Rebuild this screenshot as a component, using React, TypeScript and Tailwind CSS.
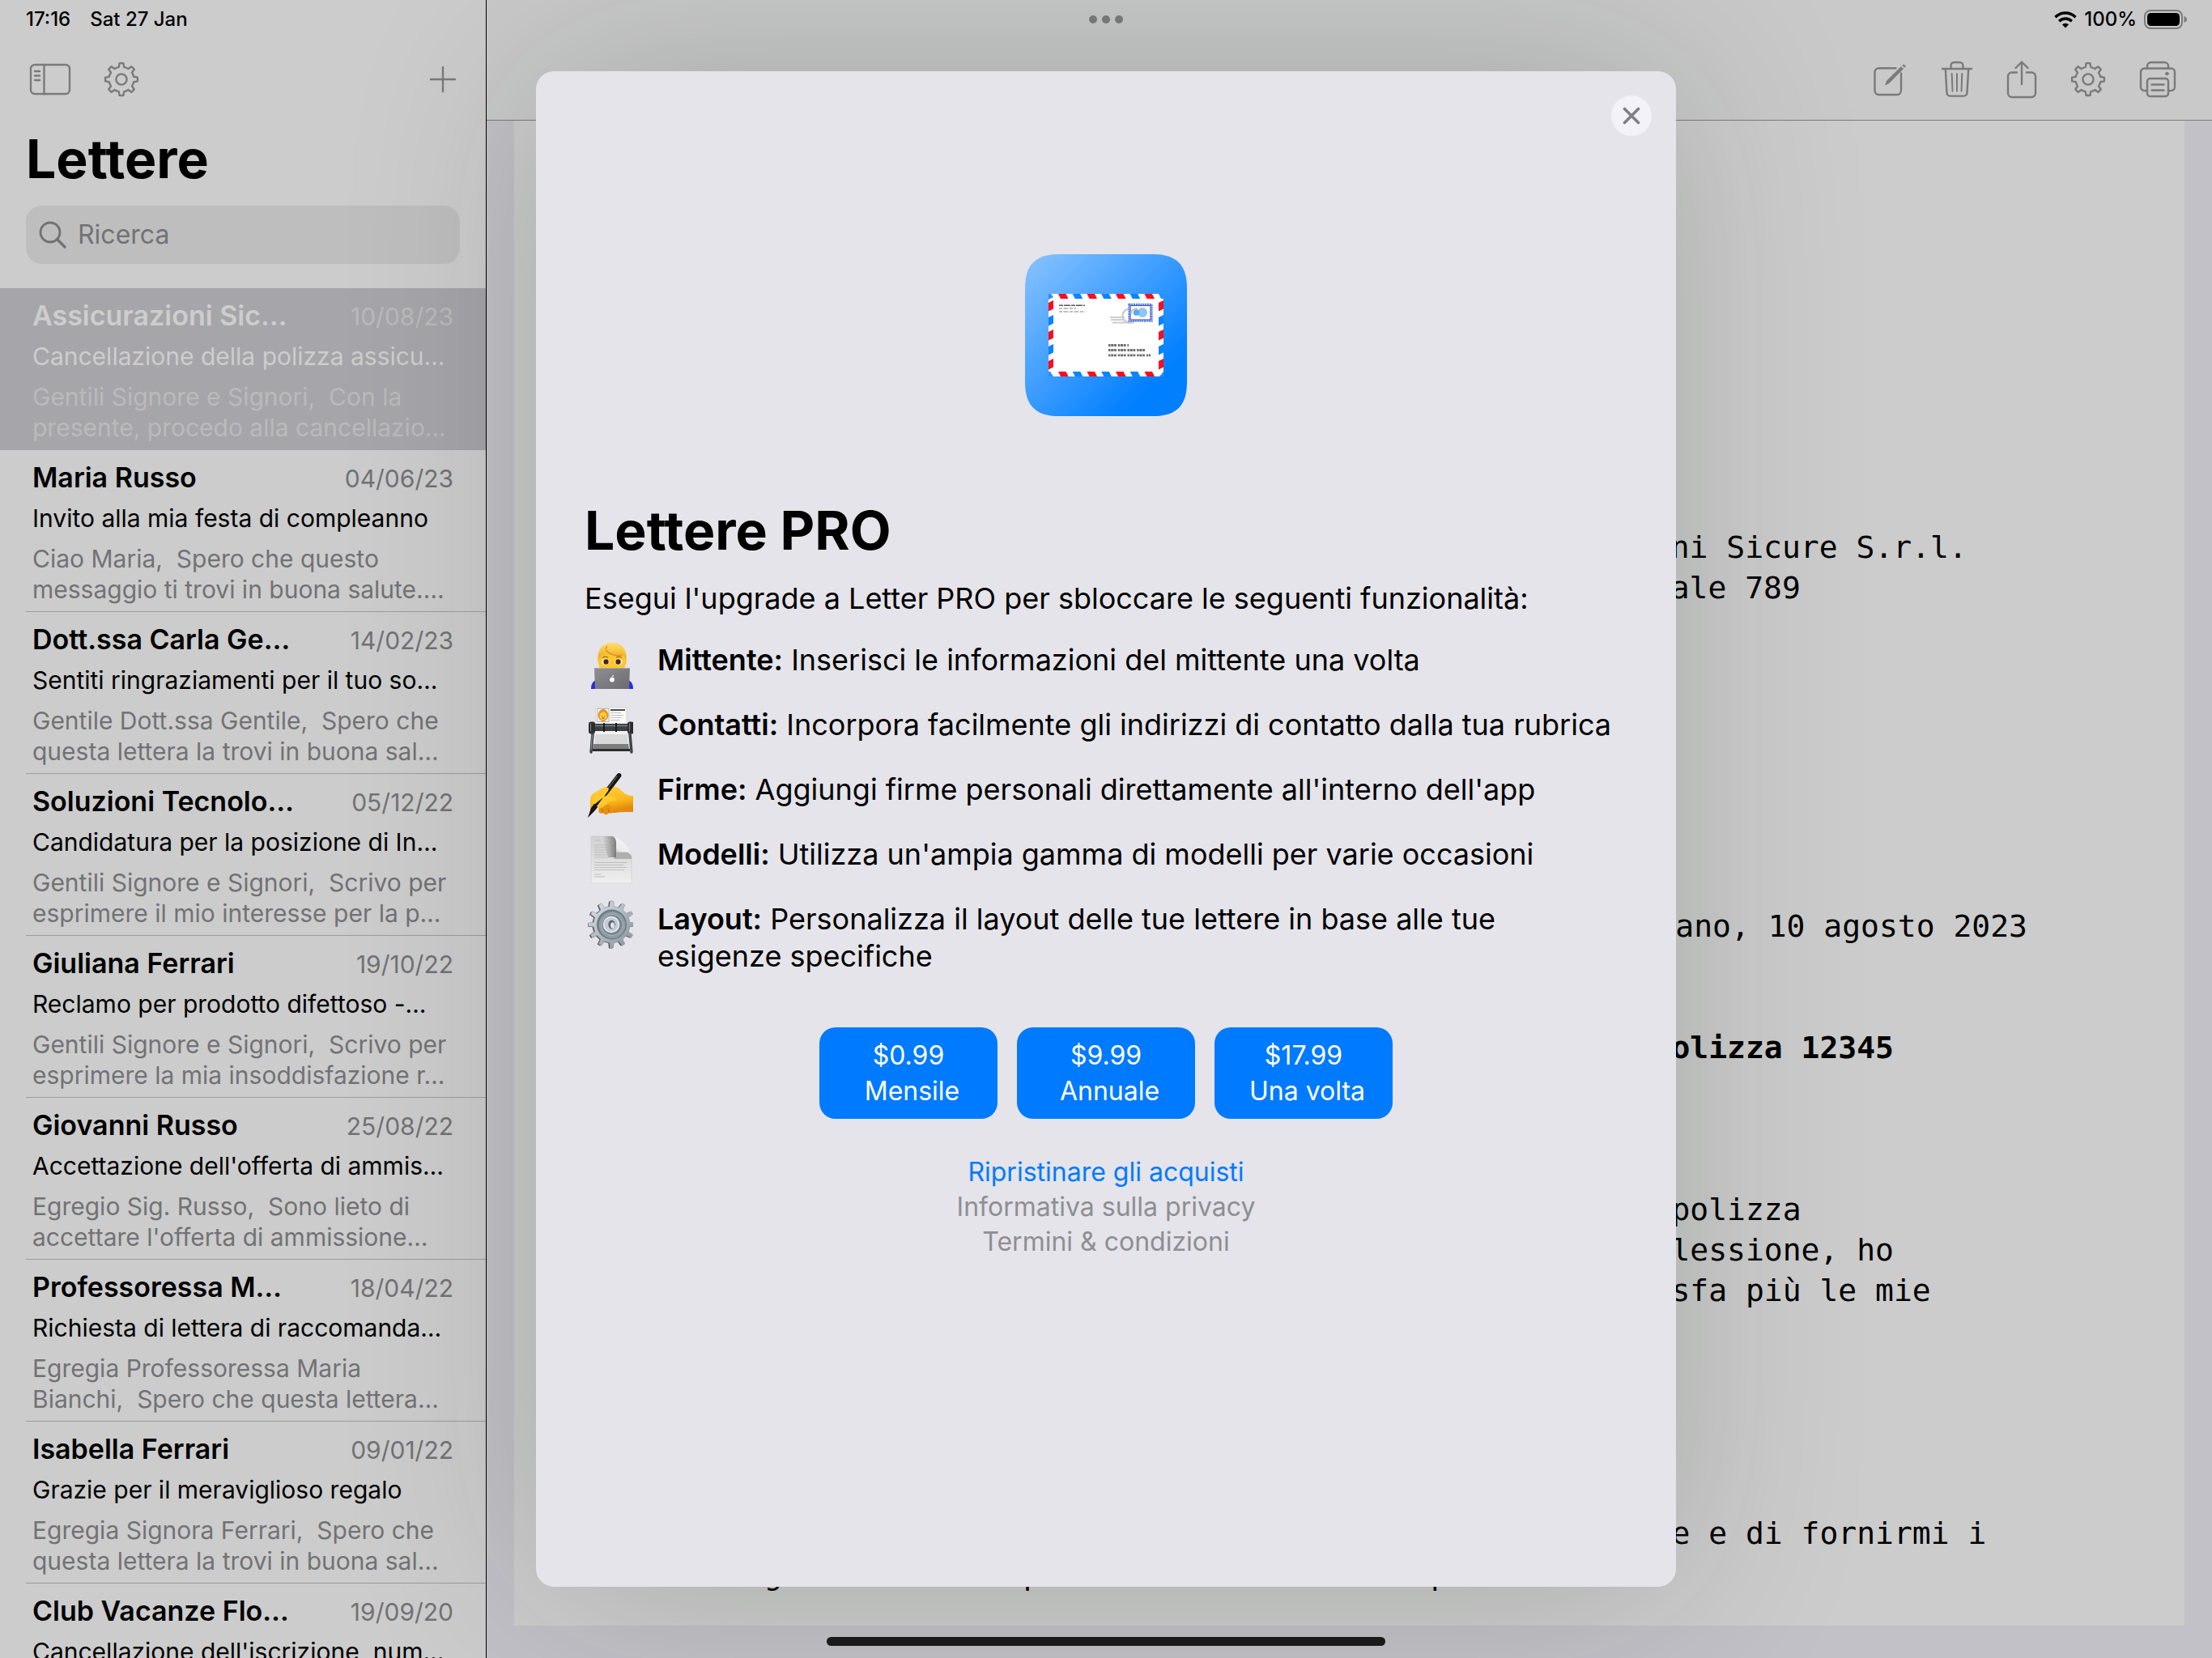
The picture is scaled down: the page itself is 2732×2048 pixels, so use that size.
import React from "react";

type Letter = {
  name: string;
  date: string;
  subject: string;
  preview: [string, string];
  selected?: boolean;
};

const letters: Letter[] = [
  {
    name: "Assicurazioni Sic…",
    date: "10/08/23",
    subject: "Cancellazione della polizza assicu…",
    preview: ["Gentili Signore e Signori,  Con la", "presente, procedo alla cancellazio…"],
    selected: true,
  },
  {
    name: "Maria Russo",
    date: "04/06/23",
    subject: "Invito alla mia festa di compleanno",
    preview: ["Ciao Maria,  Spero che questo", "messaggio ti trovi in buona salute.…"],
  },
  {
    name: "Dott.ssa Carla Ge…",
    date: "14/02/23",
    subject: "Sentiti ringraziamenti per il tuo so…",
    preview: ["Gentile Dott.ssa Gentile,  Spero che", "questa lettera la trovi in buona sal…"],
  },
  {
    name: "Soluzioni Tecnolo…",
    date: "05/12/22",
    subject: "Candidatura per la posizione di In…",
    preview: ["Gentili Signore e Signori,  Scrivo per", "esprimere il mio interesse per la p…"],
  },
  {
    name: "Giuliana Ferrari",
    date: "19/10/22",
    subject: "Reclamo per prodotto difettoso -…",
    preview: ["Gentili Signore e Signori,  Scrivo per", "esprimere la mia insoddisfazione r…"],
  },
  {
    name: "Giovanni Russo",
    date: "25/08/22",
    subject: "Accettazione dell'offerta di ammis…",
    preview: ["Egregio Sig. Russo,  Sono lieto di", "accettare l'offerta di ammissione…"],
  },
  {
    name: "Professoressa M…",
    date: "18/04/22",
    subject: "Richiesta di lettera di raccomanda…",
    preview: ["Egregia Professoressa Maria", "Bianchi,  Spero che questa lettera…"],
  },
  {
    name: "Isabella Ferrari",
    date: "09/01/22",
    subject: "Grazie per il meraviglioso regalo",
    preview: ["Egregia Signora Ferrari,  Spero che", "questa lettera la trovi in buona sal…"],
  },
  {
    name: "Club Vacanze Flo…",
    date: "19/09/20",
    subject: "Cancellazione dell'iscrizione, num…",
    preview: ["Gentili Signore e Signori,  Con la", "presente desidero comunicare la…"],
  },
];

/* Outline of a cog: straight-sided teeth joined by arcs. */
function cogPath(cx: number, cy: number, teeth: number, rOut: number, rIn: number, tip: number, root: number) {
  const pt = (r: number, deg: number) => {
    const a = ((deg - 90) * Math.PI) / 180;
    return `${(cx + r * Math.cos(a)).toFixed(2)} ${(cy + r * Math.sin(a)).toFixed(2)}`;
  };
  const step = 360 / teeth;
  let d = "";
  for (let i = 0; i < teeth; i++) {
    const a = i * step;
    d += i === 0 ? `M${pt(rIn, a - root)}` : `A${rIn} ${rIn} 0 0 1 ${pt(rIn, a - root)}`;
    d += `L${pt(rOut, a - tip)}A${rOut} ${rOut} 0 0 1 ${pt(rOut, a + tip)}L${pt(rIn, a + root)}`;
  }
  return `${d}A${rIn} ${rIn} 0 0 1 ${pt(rIn, -root)}Z`;
}

const line = {
  fill: "none",
  stroke: "currentColor",
  strokeWidth: 2.4,
  strokeLinecap: "round" as const,
  strokeLinejoin: "round" as const,
};

function GearIcon() {
  return (
    <svg width="44" height="44" viewBox="0 0 44 44" {...line}>
      <path d={cogPath(22, 22, 8, 20, 15.5, 7, 12)} />
      <circle cx="22" cy="22" r="6.6" />
    </svg>
  );
}

function SidebarIcon() {
  return (
    <svg width="52" height="42" viewBox="0 0 52 42" {...line}>
      <rect x="2" y="3" width="48" height="36" rx="5" />
      <path d="M18.500 3V39M7 11H13M7 16.500H13M7 22H13" />
    </svg>
  );
}

function PlusIcon() {
  return (
    <svg width="34" height="34" viewBox="0 0 34 34" {...line}>
      <path d="M17 2V32M2 17H32" />
    </svg>
  );
}

function ComposeIcon() {
  return (
    <svg width="44" height="44" viewBox="0 0 44 44" {...line}>
      <path d="M29.500 8.200H8.500a5 5 0 0 0-5 5V36a5 5 0 0 0 5 5H31a5 5 0 0 0 5-5V14.500" />
      <path d="M16.800 28.400l1.800-4.600L36 6.600l2.400 2.400L21.200 26.400z" fill="currentColor" strokeWidth="1" />
      <path d="M38.200 4.700l1-1 2.200 2.200-1 1z" fill="currentColor" strokeWidth="1" />
    </svg>
  );
}

function TrashIcon() {
  return (
    <svg width="40" height="46" viewBox="0 0 40 46" {...line}>
      <path d="M2 10H38M12.500 10V6a4 4 0 0 1 4-4h7a4 4 0 0 1 4 4v4M5.800 10l1.700 29.800a4 4 0 0 0 4 3.800h17a4 4 0 0 0 4-3.800L34.200 10" />
      <path d="M13.700 16l.8 21.500M20 16V37.500M26.300 16l-.8 21.500" strokeWidth="2" />
    </svg>
  );
}

function ShareIcon() {
  return (
    <svg width="38" height="48" viewBox="0 0 38 48" {...line}>
      <path d="M13 15.500H7a5 5 0 0 0-5 5V41a5 5 0 0 0 5 5H31a5 5 0 0 0 5-5V20.500a5 5 0 0 0-5-5H25" />
      <path d="M19 30V3M11.500 10L19 2.500L26.500 10" />
    </svg>
  );
}

function PrinterIcon() {
  return (
    <svg width="46" height="46" viewBox="0 0 46 46" {...line}>
      <path d="M10 9.500V6.500a4.500 4.500 0 0 1 4.500-4.500h17A4.500 4.500 0 0 1 36 6.500v3" />
      <path d="M10 37H6.500A4.500 4.500 0 0 1 2 32.500V14a4.500 4.500 0 0 1 4.500-4.500h33A4.500 4.500 0 0 1 44 14v18.500a4.500 4.500 0 0 1-4.500 4.500H36" />
      <rect x="10" y="22" width="26" height="22" rx="3.500" />
      <path d="M15.500 29.500h15M15.500 36.500h15" />
      <circle cx="34.500" cy="16" r="1.800" fill="currentColor" strokeWidth="1" />
    </svg>
  );
}

function SearchIcon() {
  return (
    <svg width="34" height="34" viewBox="0 0 34 34" {...line} strokeWidth={2.8}>
      <circle cx="14" cy="14" r="12" />
      <path d="M23 23L32 32" strokeWidth={3.2} />
    </svg>
  );
}

function WifiIcon() {
  return (
    <svg width="28" height="21" viewBox="0 0 28 21" fill="none" stroke="#000" strokeWidth="3.400">
      <path d="M1.500 7.200a17.800 17.800 0 0 1 25 0" />
      <path d="M6.200 12.200a11.200 11.200 0 0 1 15.600 0" />
      <path d="M14 20.500l-4-4.200a5.800 5.800 0 0 1 8 0z" fill="#000" stroke="none" />
    </svg>
  );
}

function BatteryIcon() {
  return (
    <svg width="54" height="24" viewBox="0 0 54 24">
      <rect x="1" y="1" width="46" height="22" rx="7" fill="none" stroke="#7b7b7d" strokeWidth="2" />
      <rect x="4" y="4" width="40" height="16" rx="4.500" fill="#000" />
      <path d="M49.500 8c2.600 1 3.500 2.600 3.500 4s-.9 3-3.500 4z" fill="#7b7b7d" />
    </svg>
  );
}

function AppIcon() {
  const dx = [41, 58.750, 76.500, 94.250, 112, 129.750, 147.500];
  const dy = [58, 76, 94, 112, 130];
  return (
    <svg width="200" height="200" viewBox="0 0 200 200" aria-label="Lettere PRO" role="img">
      <defs>
        <linearGradient id="app-bg" x1="0" y1="0" x2="1" y2="1">
          <stop offset="0" stopColor="#8ac3ff" />
          <stop offset="0.450" stopColor="#3d9dff" />
          <stop offset="0.800" stopColor="#007fff" />
        </linearGradient>
      </defs>
      <path
        d="M42 0H158C187 0 200 13 200 42V158C200 187 187 200 158 200H42C13 200 0 187 0 158V42C0 13 13 0 42 0Z"
        fill="url(#app-bg)"
      />
      <rect x="29" y="49" width="142" height="102" fill="#fff" />
      {dx.map((x, i) => (
        <g key={x} fill={i % 2 ? "#0a84ff" : "#ff0a1f"}>
          <path d={`M${x} 49h9.500l3 6h-9.500z`} />
          <path d={`M${x} 145h9.500l3 6h-9.500z`} />
        </g>
      ))}
      {dy.map((y, i) => (
        <g key={y} fill={i % 2 ? "#0a84ff" : "#ff0a1f"}>
          <path d={`M29 ${y + 2}l6-3v10.500l-6 3z`} />
          <path d={`M165 ${y + 2}l6-3v10.500l-6 3z`} />
        </g>
      ))}
      <path d="M29 49h3l3 4-6 3zM165 49h6v6h-3zM29 145h2l4 6h-6zM171 145v6h-5z" fill="#2a90ff" />
      <path d="M42 63.200h32" stroke="#555" strokeWidth="1.500" strokeDasharray="5 1 8 1" />
      <path d="M42 67h21M42 71h32" stroke="#aaa" strokeWidth="1.500" strokeDasharray="4 1.500 6 1.500" />
      <g fill="none" stroke="#cdcdcd">
        <circle cx="129" cy="76" r="8.500" strokeWidth="2.500" />
        <path d="M105 78h18M106 81h16M108 84.500h26" strokeWidth="2.200" />
      </g>
      <rect x="128.500" y="62" width="28" height="20.500" fill="#fff" stroke="#4f86ea" strokeWidth="2.400" strokeDasharray="2 0.800" />
      <rect x="130" y="63.500" width="25" height="17.500" fill="#fff" stroke="#5b4fb0" strokeWidth="1.200" />
      <circle cx="145" cy="72" r="6" fill="#8ec5fb" />
      <circle cx="137.500" cy="72" r="3.800" fill="#5aa9f0" />
      <path d="M131 74c0-5 3-7 8-7" fill="none" stroke="#b9bec4" strokeWidth="1.600" />
      <path d="M103 112.500h25M103 118.500h46M103 124.800h52" stroke="#6e6e6e" strokeWidth="2.800" strokeDasharray="2.500 0.700 3.200 0.700 2.800 1.800" />
    </svg>
  );
}

function TechnologistIcon() {
  return (
    <svg width="56" height="60" viewBox="0 0 56 60">
      <defs>
        <linearGradient id="hair" x1="0" y1="0" x2="0" y2="1">
          <stop offset="0" stopColor="#ffdb62" />
          <stop offset="1" stopColor="#f0a71e" />
        </linearGradient>
        <linearGradient id="lap" x1="0" y1="0" x2="1" y2="1">
          <stop offset="0" stopColor="#8e8e93" />
          <stop offset="1" stopColor="#6c6c70" />
        </linearGradient>
      </defs>
      <path d="M4 59c0-6 2-9 6-11h40c4 2 6 5 6 11z" fill="#2b2fd8" />
      <path d="M13 28C10 11 17 2 30 2s20 9 17 26z" fill="url(#hair)" />
      <path d="M14.500 17h31c1.500 3 2 6 1.500 9-.5 6-3 11-6 13H19c-3-2-5.500-7-6-13-.5-3 0-6 1.500-9z" fill="#ffc62f" />
      <path d="M13 22c0-6 1-9 4-12C20 5 26 3 30 4c8 0 14 5 16 12 .5 2 1 4 1 6-2-2-3-3-4-5-7 2-15 0-20-5-2 4-6 6-10 10z" fill="url(#hair)" />
      <path d="M23 12c5 5 13 7 20 5M24 6c-2 2-2 4-1 6" fill="none" stroke="#d98c12" strokeWidth="1.100" />
      <ellipse cx="22" cy="25.500" rx="4.600" ry="3.800" fill="#fff" />
      <ellipse cx="38" cy="25.500" rx="4.600" ry="3.800" fill="#fff" />
      <circle cx="22.500" cy="25.500" r="3.200" fill="#4a250f" />
      <circle cx="37.500" cy="25.500" r="3.200" fill="#4a250f" />
      <path d="M18 20.500c2-1.500 5-1.500 7-.3M35 20.200c2-1.200 5-1.200 7 .3" fill="none" stroke="#a8660c" strokeWidth="1.200" />
      <path d="M8 33.500h44l-1 25.500H9z" fill="url(#lap)" />
      <path d="M8 33.500h44" stroke="#a5a5a9" strokeWidth="1.200" />
      <circle cx="30" cy="47.500" r="2.900" fill="#fff" />
      <path d="M30 44c0-1.500 1-2.200 2-2.200 0 1.400-.8 2.200-2 2.200z" fill="#fff" />
    </svg>
  );
}

function CardIndexIcon() {
  return (
    <svg width="56" height="60" viewBox="0 0 56 60">
      <rect x="10" y="2" width="38" height="20" fill="#fafafa" stroke="#cfcfcf" strokeWidth="0.800" />
      <rect x="12" y="3.500" width="14" height="16" fill="#fff" stroke="#999" strokeWidth="0.800" />
      <ellipse cx="19" cy="11.500" rx="6.400" ry="7.400" fill="#e8951c" />
      <ellipse cx="19" cy="12.500" rx="4.400" ry="5" fill="#ffcf4d" />
      <path d="M17.300 12v.8M20.700 12v.8M17.500 15h3" stroke="#5b2d0b" strokeWidth="1" />
      <path d="M28 5h18" stroke="#222" strokeWidth="1.600" />
      <path d="M28 8.500h13M28 11.500h16M28 14.500h14M28 17.500h12" stroke="#bbb" strokeWidth="0.900" />
      <path d="M9 30h40v18H9z" fill="#d9d9da" />
      <path d="M9 30h40v5H9z" fill="#f2f2f2" />
      <path d="M7 47h43l1 7H6z" fill="#7d7e80" />
      <rect x="6" y="53" width="46" height="3" fill="#2b2d30" />
      <rect x="3" y="22" width="52" height="9" rx="2" fill="#3a3d41" />
      <path d="M9 24.500h40" stroke="#7d8287" strokeWidth="1.500" />
      <rect x="1" y="19.500" width="8" height="15" rx="3" fill="#2a2c30" />
      <rect x="49" y="19.500" width="8" height="15" rx="3" fill="#2a2c30" />
      <path d="M3.500 21.500v10M51.500 21.500v10" stroke="#7a7f85" strokeWidth="1.200" />
      <path d="M20 21v11M35 21v11" stroke="#191a1c" strokeWidth="2" />
      <path d="M6 34L4 57M52 34l2 23" stroke="#3f4347" strokeWidth="3.400" strokeLinecap="round" />
      <path d="M5.500 36L4 54" stroke="#9aa0a5" strokeWidth="0.900" />
    </svg>
  );
}

function WritingHandIcon() {
  return (
    <svg width="56" height="60" viewBox="0 0 56 60">
      <defs>
        <linearGradient id="skin" x1="0" y1="0" x2="0.300" y2="1">
          <stop offset="0" stopColor="#ffd23c" />
          <stop offset="0.650" stopColor="#fdb91e" />
          <stop offset="1" stopColor="#e3890c" />
        </linearGradient>
      </defs>
      <path d="M10 38c2 9 7 14 13 14h10c6-1 12-1 23-1V31c-6 0-10-2-14-6-4-4-8-6-13-6-8 0-14 4-22 9-3 2-4 4-4 8v14c2-3 5-8 7-12z" fill="url(#skin)" />
      <path d="M14 47c-2 4 1 7 5 5 2 3 5 3 7 0 3 2 5 0 6-3l-6-7-9 1z" fill="#e8930f" />
      <path d="M18 48c0 2 0 3 1 4M25 47c1 2 1 3 1 5" stroke="#b8650a" strokeWidth="1" fill="none" />
      <path d="M36 4.500c2-3 7-1 5 3L9 49l-9 9 4-12z" fill="#151515" />
      <path d="M36.500 6.500L7 46" stroke="#666" strokeWidth="1.200" />
      <path d="M6 39c2-8 8-15 16-18 3-1 5 1 3 4l-5 7c7-3 14-1 17 5-7-1-12 1-15 5-3 4-8 5-11 2-2-2-3-3-5-5z" fill="#ffc92f" />
      <path d="M19 33L9.500 46l-5 2 2-5z" fill="#151515" />
    </svg>
  );
}

function PageCurlIcon() {
  return (
    <svg width="56" height="60" viewBox="0 0 56 60">
      <defs>
        <linearGradient id="sheet" x1="0" y1="0" x2="0" y2="1">
          <stop offset="0" stopColor="#d2d2d2" />
          <stop offset="0.500" stopColor="#dedede" />
          <stop offset="1" stopColor="#f0f0f0" />
        </linearGradient>
        <linearGradient id="curl" x1="0.100" y1="1" x2="0.900" y2="0.100">
          <stop offset="0" stopColor="#8a8a8a" />
          <stop offset="0.350" stopColor="#e9e9e9" />
          <stop offset="1" stopColor="#fafafa" />
        </linearGradient>
        <linearGradient id="curl-shade" x1="0" y1="0.500" x2="1" y2="0.500">
          <stop offset="0" stopColor="#666" stopOpacity="0" />
          <stop offset="1" stopColor="#555" stopOpacity="0.700" />
        </linearGradient>
      </defs>
      <path d="M4 1h25c4 0 6 3 6 8v5c0 4 2 6 6 6h6c4 0 7 2 7 6v33H4z" fill="url(#sheet)" stroke="#c9c9c9" strokeWidth="0.600" />
      <path d="M18 1h11c4 0 6 3 6 8v18H25z" fill="url(#curl-shade)" />
      <path d="M33 19c1 1 3 2 8 2h6c4 0 6 2 7 5v3H32z" fill="#777" opacity="0.450" />
      <path d="M29 1c11 1 22 12 25 24-2-4-5-5-8-5h-5c-4 0-6-2-6-6V9c0-5-2-8-6-8z" fill="url(#curl)" />
      <path d="M8 6h8M8 12h17M8 15h20M8 18h18M8 21h20M8 24h21M8 27h18M8 33.500h40M8 36.500h36M8 39.500h40M8 42.500h37M8 48h8M8 51h13" stroke="#b4b4b4" strokeWidth="0.800" />
    </svg>
  );
}

function MetalGearIcon() {
  return (
    <svg width="56" height="60" viewBox="0 0 56 60">
      <defs>
        <linearGradient id="metal" x1="0" y1="0" x2="1" y2="1">
          <stop offset="0" stopColor="#dfe6ec" />
          <stop offset="0.500" stopColor="#aeb8c2" />
          <stop offset="1" stopColor="#838e98" />
        </linearGradient>
      </defs>
      <path d={cogPath(28, 30.500, 12, 29, 22.500, 4, 7)} fill="#5b4a42" />
      <path d={cogPath(29.500, 30, 12, 29, 22.500, 4, 7)} fill="url(#metal)" stroke="#8a949d" strokeWidth="0.600" />
      <circle cx="29.500" cy="30" r="18.500" fill="#6f7a83" />
      <circle cx="30" cy="30.500" r="16.500" fill="#929ca5" />
      <circle cx="30" cy="30.500" r="13" fill="#7a848d" />
      <circle cx="30" cy="30.500" r="13" fill="none" stroke="#aeb7bf" strokeWidth="1" />
      <circle cx="29" cy="30" r="9.500" fill="#c3ccd5" />
      <circle cx="29" cy="30" r="9.500" fill="none" stroke="#eef2f5" strokeWidth="1.400" />
      <ellipse cx="29.500" cy="30" rx="4.200" ry="5.400" fill="#5d6770" />
      <ellipse cx="30.500" cy="31" rx="2.400" ry="3.800" fill="#e5e5ea" />
    </svg>
  );
}

const features = [
  { icon: <TechnologistIcon />, title: "Mittente:", text: "Inserisci le informazioni del mittente una volta" },
  { icon: <CardIndexIcon />, title: "Contatti:", text: "Incorpora facilmente gli indirizzi di contatto dalla tua rubrica" },
  { icon: <WritingHandIcon />, title: "Firme:", text: "Aggiungi firme personali direttamente all'interno dell'app" },
  { icon: <PageCurlIcon />, title: "Modelli:", text: "Utilizza un'ampia gamma di modelli per varie occasioni" },
  { icon: <MetalGearIcon />, title: "Layout:", text: "Personalizza il layout delle tue lettere in base alle tue esigenze specifiche" },
];

const plans = [
  { price: "$0.99", label: "Mensile" },
  { price: "$9.99", label: "Annuale" },
  { price: "$17.99", label: "Una volta" },
];

function LetterRow({ letter }: { letter: Letter }) {
  const sel = letter.selected;
  return (
    <li className={sel ? "bg-[#a6a5aa]" : ""}>
      <div className={sel ? "h-[200px] pl-8" : "ml-8 h-[200px] border-b border-[#9c9c9e]"}>
        <a href="#letter" className="block whitespace-pre pt-[10px] pr-10 pl-2">
          <div className="flex items-baseline justify-between leading-[48px]">
            <span className={sel ? "text-[34px] font-semibold text-[#cdcdcd]" : "text-[34px] font-semibold text-black"}>
              {letter.name}
            </span>
            <span className={sel ? "text-[30px] text-[#bababb]" : "text-[30px] text-[#727275]"}>{letter.date}</span>
          </div>
          <div className={sel ? "text-[30px] leading-[50px] text-[#cdcdcd]" : "text-[30px] leading-[50px] text-black"}>
            {letter.subject}
          </div>
          <div className={sel ? "pt-[6px] text-[30px] leading-[38px] text-[#bababb]" : "pt-[6px] text-[30px] leading-[38px] text-[#727275]"}>
            <div>{letter.preview[0]}</div>
            <div>{letter.preview[1]}</div>
          </div>
        </a>
      </div>
    </li>
  );
}

function Sidebar() {
  return (
    <aside className="flex w-[22%] shrink-0 flex-col overflow-hidden border-r border-black bg-[#cccccc]">
      <div className="flex h-12 shrink-0 items-center gap-6 pl-8 text-[24px] font-medium">
        <span>17:16</span>
        <span>Sat 27 Jan</span>
      </div>
      <div className="flex h-[100px] shrink-0 items-center gap-10 pr-[36px] pl-9 text-[#7a7a7a]">
        <button aria-label="Barra laterale"><SidebarIcon /></button>
        <button aria-label="Impostazioni"><GearIcon /></button>
        <button aria-label="Nuova lettera" className="ml-auto"><PlusIcon /></button>
      </div>
      <h1 className="shrink-0 pl-8 text-[66px] leading-[96px] font-bold">Lettere</h1>
      <label className="mx-8 mt-[10px] mb-[30px] flex h-[72px] shrink-0 items-center gap-[14px] rounded-[20px] bg-[#bebebf] pl-4 text-[#727275]">
        <SearchIcon />
        <input
          type="search"
          aria-label="Ricerca"
          placeholder="Ricerca"
          className="min-w-0 flex-1 bg-transparent text-[32px] outline-none placeholder:text-[#727275]"
        />
      </label>
      <ul>
        {letters.map((l) => (
          <LetterRow key={l.name} letter={l} />
        ))}
      </ul>
    </aside>
  );
}

function DocumentPane() {
  return (
    <main className="flex min-w-0 flex-1 flex-col bg-[#c2c1c7]">
      <header className="flex h-[149px] shrink-0 flex-col border-b border-[#7d7d7f] bg-[#c9c9ca]">
        <div className="flex h-12 items-center justify-end gap-[9px] pr-[30px] text-[24px] font-medium">
          <WifiIcon />
          <span>100%</span>
          <BatteryIcon />
        </div>
        <div className="flex flex-1 items-center justify-end gap-[41px] pr-[44px] text-[#7a7a7a]">
          <button aria-label="Modifica"><ComposeIcon /></button>
          <button aria-label="Elimina"><TrashIcon /></button>
          <button aria-label="Condividi"><ShareIcon /></button>
          <button aria-label="Impostazioni"><GearIcon /></button>
          <button aria-label="Stampa"><PrinterIcon /></button>
        </div>
      </header>
      <article className="mx-[34px] mb-10 min-h-0 flex-1 overflow-hidden bg-[#cccccc] px-[194px] pt-[502px] font-['DejaVu_Sans_Mono',monospace] text-[38px] leading-[50px] whitespace-pre">
        <div className="flex justify-end">
          <div className="w-[692px]">
            <p>Assicurazioni Sicure S.r.l.</p>
            <p>Via Principale 789</p>
          </div>
        </div>
        <p className="mt-[368px] text-right">Milano, 10 agosto 2023</p>
        <p className="mt-[100px] font-bold">Cancellazione della polizza assicurativa – Numero di polizza 12345</p>
        <p className="mt-[50px]">Gentili Signore e Signori,</p>
        <div className="mt-[50px]">
          <p>Con la presente, procedo alla cancellazione della mia polizza</p>
          <p>assicurativa numero 12345. Dopo un'attenta e lunga riflessione, ho</p>
          <p>deciso che la copertura prevista attualmente non soddisfa più le mie</p>
        </div>
        <div className="mt-[250px]">
          <p>Vi chiedo di confermare per iscritto tale cancellazione e di fornirmi i</p>
          <p>dettagli necessari per la disdetta della polizza</p>
        </div>
      </article>
    </main>
  );
}

function UpgradeSheet() {
  return (
    <section
      role="dialog"
      aria-label="Lettere PRO"
      className="relative flex h-[1872px] w-[1408px] flex-col rounded-[22px] bg-[#e5e4ea] px-[60px] shadow-[0_0_240px_rgba(0,28,0,0.19)]"
    >
      <button
        aria-label="Chiudi"
        className="absolute top-[30px] right-[30px] flex size-[50px] items-center justify-center rounded-full bg-[#f3f2f8] text-[#7f7f84]"
      >
        <svg width="22" height="22" viewBox="0 0 22 22" {...line} strokeWidth={3.6}>
          <path d="M2.500 2.500L19.500 19.500M19.500 2.500L2.500 19.500" />
        </svg>
      </button>
      <div className="mt-[226px] flex justify-center">
        <AppIcon />
      </div>
      <h2 className="mt-[94px] text-[66px] leading-[94px] font-bold">Lettere PRO</h2>
      <p className="mt-[14px] text-[36px] leading-[46px]">
        Esegui l'upgrade a Letter PRO per sbloccare le seguenti funzionalità:
      </p>
      <ul className="mt-[30px] flex flex-col gap-[34px]">
        {features.map((f) => (
          <li key={f.title} className="flex h-[46px] gap-[30px] pl-1">
            <span className="w-[56px] shrink-0">{f.icon}</span>
            <p className="min-w-0 flex-1 text-[36px] leading-[46px]">
              <b className="font-semibold">{f.title}</b> {f.text}
            </p>
          </li>
        ))}
      </ul>
      <div className="mt-[111px] flex justify-center gap-6">
        {plans.map((p) => (
          <button
            key={p.price}
            className="h-[113px] w-[220px] rounded-[20px] bg-[#007aff] text-[32px] leading-[44px] whitespace-pre text-white"
          >
            <span className="block">{p.price}</span>
            <span className="block">{"\u00a0" + p.label}</span>
          </button>
        ))}
      </div>
      <div className="mt-[44px] flex flex-col items-center text-[32px] leading-[43px] text-[#8e8e93]">
        <button className="text-[#007aff]">Ripristinare gli acquisti</button>
        <a href="#privacy">Informativa sulla privacy</a>
        <a href="#terms">Termini &amp; condizioni</a>
      </div>
    </section>
  );
}

export default function App() {
  return (
    <div className="relative flex h-screen overflow-hidden font-['Inter',sans-serif] text-black">
      <Sidebar />
      <DocumentPane />
      <div className="absolute inset-0 flex items-center justify-center">
        <UpgradeSheet />
      </div>
      <div className="absolute inset-x-0 top-[19px] flex justify-center gap-[6px]">
        <span className="size-[10px] rounded-full bg-[#747776]" />
        <span className="size-[10px] rounded-full bg-[#747776]" />
        <span className="size-[10px] rounded-full bg-[#747776]" />
      </div>
      <div className="absolute inset-x-0 bottom-[15px] flex justify-center">
        <span className="h-[11px] w-[690px] rounded-full bg-[#1a1a1a]" />
      </div>
    </div>
  );
}
